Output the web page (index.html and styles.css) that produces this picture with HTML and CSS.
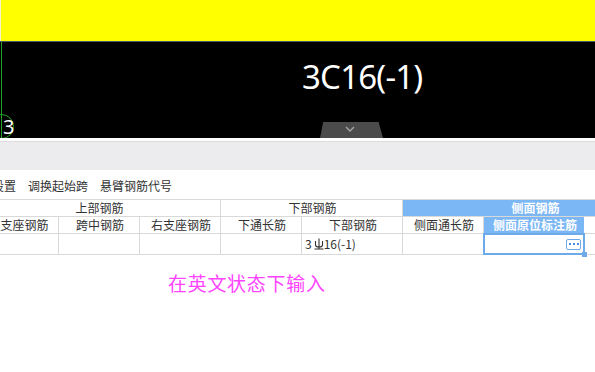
FILE: index.html
```html
<!DOCTYPE html>
<html lang="zh">
<head>
<meta charset="utf-8">
<link rel="stylesheet" href="styles.css">
</head>
<body>
<div class="page">
  <div class="yellow"></div>
  <div class="yellow-sep"></div>
  <div class="canvas">
    <div class="axis"></div>
    <div class="axis-badge"><span>3</span></div>
    <div class="big-label">3C16(-1)</div>
    <div class="fold-tab">
      <svg width="10" height="6" viewBox="0 0 10 6"><path d="M1 1 L5 5 L9 1" fill="none" stroke="#a8a8a8" stroke-width="1.3"/></svg>
    </div>
  </div>
  <div class="band"></div>
  <div class="toolbar">
    <span class="tool">设置</span>
    <span class="tool">调换起始跨</span>
    <span class="tool">悬臂钢筋代号</span>
  </div>
  <div class="grid">
    <div class="cell span3">上部钢筋</div>
    <div class="cell span2">下部钢筋</div>
    <div class="cell span3 blue">侧面钢筋</div>

    <div class="cell">左支座钢筋</div>
    <div class="cell">跨中钢筋</div>
    <div class="cell">右支座钢筋</div>
    <div class="cell">下通长筋</div>
    <div class="cell">下部钢筋</div>
    <div class="cell">侧面通长筋</div>
    <div class="cell blue">侧面原位标注筋</div>
    <div class="cell"></div>

    <div class="cell data"></div>
    <div class="cell data"></div>
    <div class="cell data"></div>
    <div class="cell data"></div>
    <div class="cell data left">3<svg class="rebar" width="10" height="12" viewBox="0 0 10 12"><path d="M5 0.5 V11 M1.5 3 V7 Q1.5 9 5 9 Q8.5 9 8.5 7 V3 M0.5 11 H9.5" fill="none" stroke="#333" stroke-width="1.1"/></svg>16(-1)</div>
    <div class="cell data"></div>
    <div class="cell data selected">
      <span class="more-btn"><i></i><i></i><i></i></span>
      <span class="handle"></span>
    </div>
    <div class="cell data"></div>
  </div>
  <div class="hint">在英文状态下输入</div>
</div>
</body>
</html>
```

FILE: styles.css
```css
html, body {
  margin: 0;
  padding: 0;
  background: #ffffff;
  overflow: hidden;
}
.page {
  width: 595px;
  height: 372px;
  overflow: hidden;
  font-family: "Noto Sans CJK SC", "Noto Sans", sans-serif;
  font-size: 12px;
  color: #333333;
}
.yellow {
  height: 41px;
  background: #ffff00;
  border-left: 1px solid #f4f4d0;
}
.yellow-sep {
  height: 1px;
  background: #4c5a66;
}
.canvas {
  position: relative;
  height: 96px;
  background: #000000;
  overflow: hidden;
}
.axis {
  position: absolute;
  left: 1px;
  top: 0;
  width: 1px;
  height: 96px;
  background: #22a022;
}
.axis-badge {
  position: absolute;
  left: -11px;
  top: 72px;
  width: 23px;
  height: 23px;
  border: 1px solid #22a022;
  border-radius: 50%;
}
.axis-badge span {
  position: absolute;
  left: 13px;
  top: 1px;
  font-family: "Noto Sans", sans-serif;
  font-size: 20px;
  line-height: 22px;
  color: #ffffff;
}
.big-label {
  position: absolute;
  left: 302px;
  top: 12px;
  font-family: "Noto Sans", sans-serif;
  font-size: 33px;
  letter-spacing: -0.8px;
  line-height: 46px;
  color: #ffffff;
}
.fold-tab {
  position: absolute;
  left: 320px;
  top: 80px;
  width: 63px;
  height: 16px;
  background: #4b4b4b;
  clip-path: polygon(5% 0, 93% 0, 100% 100%, 0 100%);
  display: flex;
  justify-content: center;
  padding-top: 4px;
  box-sizing: border-box;
}
.fold-tab svg { display: block; margin-left: -3px; }
.band {
  margin-top: 3px;
  height: 28px;
  border-top: 1px solid #dcdcdc;
  background: #ececee;
}
.toolbar {
  height: 29px;
  display: flex;
  align-items: center;
  gap: 12px;
  margin-left: -8px;
  padding-top: 1px;
  box-sizing: border-box;
  white-space: nowrap;
  color: #333333;
}
.grid {
  display: grid;
  grid-template-columns: 82px 81px 81px 81px 101px 81px 101px 81px;
  grid-template-rows: 17px 17px 21px;
  margin-left: -23px;
  width: 690px;
  border-top: 1px solid #d9d9d9;
}
.cell {
  box-sizing: border-box;
  border-right: 1px solid #d9d9d9;
  border-bottom: 1px solid #d9d9d9;
  display: flex;
  align-items: center;
  justify-content: center;
  white-space: nowrap;
  line-height: 16px;
  padding-left: 2px;
}
.span3 { grid-column: span 3; }
.span2 { grid-column: span 2; }
.blue {
  background: #7bb6f5;
  color: #ffffff;
  font-weight: bold;
  border-right-color: #ffffff;
}
.grid .cell.blue.span3 { border-right: none; }
.left {
  justify-content: flex-start;
  padding-left: 3px;
}
.rebar {
  margin: 0 0 0 2px;
}
.selected {
  position: relative;
  border: 2px solid #6eaaea;
  margin: -1px 0 0 -1px;
  justify-content: flex-end;
  padding-right: 2px;
}
.more-btn {
  width: 15px;
  height: 11px;
  box-sizing: border-box;
  border: 1px solid #6eaaea;
  border-radius: 2px;
  background: #ffffff;
  display: flex;
  align-items: center;
  justify-content: center;
  gap: 2px;
}
.more-btn i {
  width: 2px;
  height: 2px;
  background: #4a8fdc;
}
.handle {
  position: absolute;
  right: -4px;
  bottom: -4px;
  width: 5px;
  height: 5px;
  background: #6eaaea;
}
.hint {
  margin: 17px 0 0 168px;
  font-size: 19px;
  line-height: 22px;
  letter-spacing: 0.7px;
  color: #ff44ff;
}
```
